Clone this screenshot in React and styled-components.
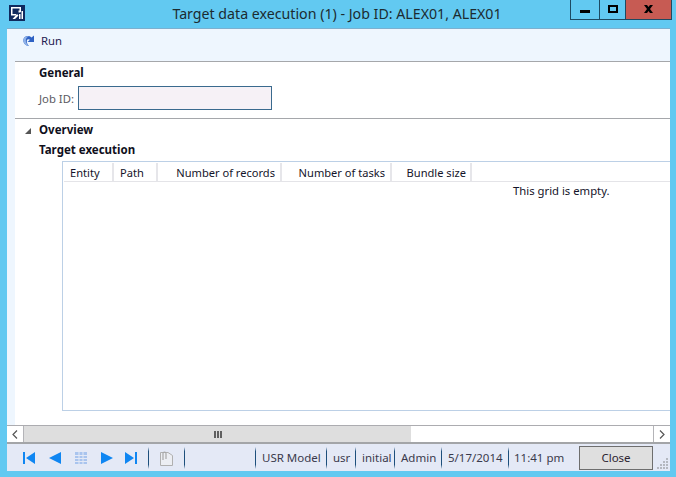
import React from 'react';
import styled, { createGlobalStyle } from 'styled-components';

const Global = createGlobalStyle`
  html, body { margin: 0; padding: 0; width: 676px; height: 477px; overflow: hidden; }
  body { font-family: "Noto Sans", "Liberation Sans", sans-serif; font-size: 11.3px; color: #1c1c2c; }
`;

const Win = styled.div`
  width: 676px; height: 477px; background: #62c9f1; display: flex; flex-direction: column;
  box-sizing: border-box; overflow: hidden;
`;
const TitleBar = styled.div`
  height: 28px; flex: none; display: flex; align-items: flex-start; position: relative;
`;
const AppIcon = styled.svg`
  width: 16px; height: 16px; margin: 5px 0 0 9px; flex: none;
`;
const Title = styled.div`
  position: absolute; left: 0; width: 676px; top: 3px; text-align: center; font-size: 14.2px;
  line-height: 22px; color: #1c2b30; text-indent: -2px;
`;
const Caption = styled.div`
  margin-left: auto; margin-right: 4px; display: flex; height: 20px; border: solid #1d4a62;
  border-width: 0 1px 1px 1px; box-sizing: border-box; position: relative;
`;
const CapBtn = styled.div`
  width: ${p => p.$w}px; display: flex; align-items: center; justify-content: center;
  background: ${p => p.$bg || 'transparent'};
  border-left: ${p => (p.$first ? 'none' : '1px solid #1d4a62')};
  box-sizing: border-box;
`;
const Body = styled.div`
  flex: none; height: 443px; margin: 0 6px 0 7px; background: #eef6fe; display: flex;
  flex-direction: column; border-top: 1px solid #7cb0cf; box-sizing: border-box;
`;
const Toolbar = styled.div`
  height: 32px; flex: none; display: flex; align-items: flex-start; padding: 3px 0 0 15px; gap: 3px;
  box-sizing: border-box; line-height: 17px; color: #1f2050;
`;
const Main = styled.div`
  flex: none; height: 381px; margin-left: 8px; background: #fff; display: flex; flex-direction: column;
  border-top: 1px solid #a5a7ab; box-sizing: border-box;
`;
const GeneralSection = styled.div`
  height: 57px; flex: none; border-bottom: 1px solid #a5a7ab; padding: 2px 0 0 24px; box-sizing: border-box;
`;
const Heading = styled.div`
  font-weight: 700; font-size: 11.5px; line-height: 17px; color: #10101c;
`;
const Field = styled.div`
  display: flex; align-items: center; margin-top: 5px; color: #5a5a62;
`;
const FieldLabel = styled.span`
  width: 39px; flex: none; white-space: nowrap;
`;
const Input = styled.div`
  width: 194px; height: 24px; box-sizing: border-box; background: #f6f1f6; border: 1px solid #3a6a8e;
`;
const Overview = styled.div`
  flex: 1; display: flex; flex-direction: column; min-height: 0;
`;
const OverviewHead = styled.div`
  display: flex; align-items: center; height: 20px; flex: none; padding: 1px 0 0 24px; position: relative;
  box-sizing: border-box;
`;
const Arrow = styled.svg`
  position: absolute; left: 10px; top: 9px; width: 6px; height: 6px;
`;
const SubHead = styled(Heading)`
  padding-left: 24px; margin-top: 2px; height: 20px; flex: none;
`;
const Grid = styled.div`
  margin-left: 47px; width: 608px; height: 250px; flex: none; box-sizing: border-box;
  border: solid #bcd0e6; border-width: 1px 0 1px 1px; padding: 1px 0 0 1px;
`;
const HeadRow = styled.div`
  display: flex; height: 19px; border-bottom: 1px solid #e4e4e8; box-sizing: border-box;
`;
const HeadCell = styled.div`
  width: ${p => p.$w}px; flex: none; box-sizing: border-box; line-height: 17px;
  padding: 1px ${p => p.$pr || 6}px 0 6px; font-size: 11.1px;
  border-right: 2px solid #e6e6ea; text-align: ${p => (p.$right ? 'right' : 'left')};
  color: #14142a; white-space: nowrap;
`;
const Empty = styled.div`
  padding-left: 449px; line-height: 17px; color: #14142a;
`;
const ScrollArea = styled.div`
  height: 17px; margin-top: 14px; flex: none; display: flex; margin-left: -8px; background: #fff;
  border-top: 1px solid #acacb0; box-sizing: border-box; width: 663px;
`;
const ScrollBtn = styled.div`
  width: 17px; flex: none; display: flex; align-items: center; justify-content: center; box-sizing: border-box;
  border: solid #b4b4b8; border-width: ${p => (p.$end ? '0 0 0 1px' : '0 1px 0 0')}; background: #fff;
`;
const Thumb = styled.div`
  width: 387px; flex: none; background: #dedede; display: flex; align-items: center; justify-content: center;
  gap: 1px;
`;
const Grip = styled.i`
  width: 2px; height: 7px; background: #606060; display: block;
`;
const Track = styled.div`flex: 1;`;
const Status = styled.div`
  flex: 1; border-top: 2px solid #a3a5a8; background: #e4e9f6; display: flex;
  align-items: center; box-sizing: border-box; padding-left: 15px; position: relative; min-height: 0;
`;
const NavIcon = styled.svg`
  width: 16px; height: 16px; flex: none; display: block; margin: ${p => p.$m || '0'};
`;
const Sep = styled.div`
  width: 1px; height: 22px; margin: ${p => p.$m || '0'}; flex: none;
  background: linear-gradient(#e4e9f6, #1d4f7c 20%, #1d4f7c 80%, #e4e9f6);
`;
const Info = styled.div`
  width: ${p => p.$w}px; box-sizing: border-box; padding-left: ${p => p.$pl || 6}px; line-height: 20px; font-size: 11.5px;
  color: #3a3a4c; white-space: nowrap; flex: none;
`;
const CloseBtn = styled.div`
  margin-left: auto; margin-right: 17px; width: 74px; height: 24px; flex: none;
  box-sizing: border-box; background: #dfdfdf; border: 1px solid #6e6e6e; display: flex;
  align-items: center; justify-content: center; color: #2c2430; font-size: 11.5px;
`;
const GripCorner = styled.svg`
  position: absolute; right: 1px; bottom: 1px; width: 12px; height: 12px;
`;

const Nav = ({ d, m }) => (
  <NavIcon viewBox="0 0 16 16" $m={m}><path d={d} fill="#0f86f2" /></NavIcon>
);

export default function App() {
  return (
    <Win>
      <Global />
      <TitleBar>
        <AppIcon viewBox="0 0 16 16">
          <rect width="16" height="16" fill="#0f2a5e" />
          <path d="M2 2h10v5h-1.500V3.500h-7V9H7v1.500H2z" fill="#fff" />
          <path d="M3.500 14l4.500-5 1.500 1.500L6 14zM10 9h1.500v5H10zM12.500 6H14v8h-1.500zM9.500 5.500H11.500V7.500H9.500z" fill="#fff" />
        </AppIcon>
        <Title>Target data execution (1) - Job ID: ALEX01, ALEX01</Title>
        <Caption>
          <CapBtn $w={28} $first>
            <svg width="10" height="3" viewBox="0 0 10 3" style={{ marginTop: 4 }}><rect width="10" height="3" fill="#000" /></svg>
          </CapBtn>
          <CapBtn $w={26}>
            <svg width="10" height="8" viewBox="0 0 10 8" style={{ marginBottom: 1 }}><path d="M0 0h10v8H0zM2 2v4h6V2z" fill="#000" fillRule="evenodd" /></svg>
          </CapBtn>
          <CapBtn $w={46} $bg="#c75b53">
            <svg width="9" height="8" viewBox="0 0 9 8" style={{ marginBottom: 1 }}><path d="M0 0h3l1.500 2L6 0h3L6 4l3 4H6L4.500 6 3 8H0l3-4z" fill="#000" /></svg>
          </CapBtn>
        </Caption>
      </TitleBar>
      <Body>
        <Toolbar>
          <svg width="16" height="16" viewBox="0 0 16 16" style={{ flex: 'none', marginTop: 1 }}>
            <path d="M1.500 6C2.500 3 6.500 2 9.500 4.500L12 2.500V9H5.500L8 6.800C6.800 5.800 5 5.800 4.800 7.800 4.600 9.800 5.500 11.500 7 13 4 13 .5 10 1.500 6Z" fill="#2f62c4" />
            <path d="M1.500 6C2.300 3.800 5 2.800 7 3.400 5 3.800 4 5 3.800 7.500 3.700 9.800 5.500 11.500 7 13 4 13 .5 10 1.500 6Z" fill="#8fb2e8" />
          </svg>
          <span>Run</span>
        </Toolbar>
        <Main>
          <GeneralSection>
            <Heading>General</Heading>
            <Field>
              <FieldLabel>Job ID:</FieldLabel>
              <Input />
            </Field>
          </GeneralSection>
          <Overview>
            <OverviewHead>
              <Arrow viewBox="0 0 6 6"><path d="M6 0v6H0z" fill="#555" /></Arrow>
              <Heading>Overview</Heading>
            </OverviewHead>
            <SubHead>Target execution</SubHead>
            <Grid>
              <HeadRow>
                <HeadCell $w={50}>Entity</HeadCell>
                <HeadCell $w={44}>Path</HeadCell>
                <HeadCell $w={124} $right $pr={5}>Number of records</HeadCell>
                <HeadCell $w={110} $right $pr={5}>Number of tasks</HeadCell>
                <HeadCell $w={80} $right $pr={4}>Bundle size</HeadCell>
              </HeadRow>
              <Empty>This grid is empty.</Empty>
            </Grid>
            <ScrollArea>
              <ScrollBtn>
                <svg width="6" height="9" viewBox="0 0 6 9"><path d="M5 .5L1 4.500l4 4" fill="none" stroke="#555" strokeWidth="1.200" /></svg>
              </ScrollBtn>
              <Thumb><Grip /><Grip /><Grip /></Thumb>
              <Track />
              <ScrollBtn $end>
                <svg width="6" height="9" viewBox="0 0 6 9"><path d="M1 .5l4 4-4 4" fill="none" stroke="#555" strokeWidth="1.200" /></svg>
              </ScrollBtn>
            </ScrollArea>
          </Overview>
        </Main>
        <Status>
          <Nav d="M1 2h2v12H1zM13 2v12L4 8z" m="0 10px 0 0" />
          <Nav d="M13 2v12L1 8z" m="0 10px 0 0" />
          <NavIcon viewBox="0 0 16 16" $m="0 10px 0 0">
            <path d="M1 2h12v12H1z" fill="#a9c4ee" />
            <path d="M1 5h12v1H1zM1 8h12v1H1zM1 11h12v1H1zM4.500 2h1v12h-1zM8.500 2h1v12h-1z" fill="#e4e9f6" />
          </NavIcon>
          <Nav d="M1 2v12l12-6z" m="0 8px 0 0" />
          <Nav d="M1 2v12l9-6zM11 2h2v12h-2z" />
          <Sep $m="0 0 0 8px" />
          <NavIcon viewBox="0 0 16 16" $m="0 10px 0 9px">
            <path d="M2.500 2.500H10L14.500 5.500v10h-12z" fill="#eceef3" stroke="#b0b0b0" />
            <path d="M5 10V3.500a1.500 1.500 0 0 1 3 0V9" fill="none" stroke="#a8a8a8" strokeWidth="1.200" />
          </NavIcon>
          <Sep />
          <Sep $m="0 0 0 70px" />
          <Info $w={70}>USR Model</Info>
          <Sep />
          <Info $w={28}>usr</Info>
          <Sep />
          <Info $w={38}>initial</Info>
          <Sep />
          <Info $w={46}>Admin</Info>
          <Sep />
          <Info $w={66}>5/17/2014</Info>
          <Sep />
          <Info $w={60} $pl={5}>11:41 pm</Info>
          <CloseBtn>Close</CloseBtn>
          <GripCorner viewBox="0 0 12 12">
            <path d="M9 0h2v2H9zM6 3h2v2H6zM9 3h2v2H9zM3 6h2v2H3zM6 6h2v2H6zM9 6h2v2H9zM0 9h2v2H0zM3 9h2v2H3zM6 9h2v2H6zM9 9h2v2H9z" fill="#b4b8c0" />
          </GripCorner>
        </Status>
      </Body>
    </Win>
  );
}
